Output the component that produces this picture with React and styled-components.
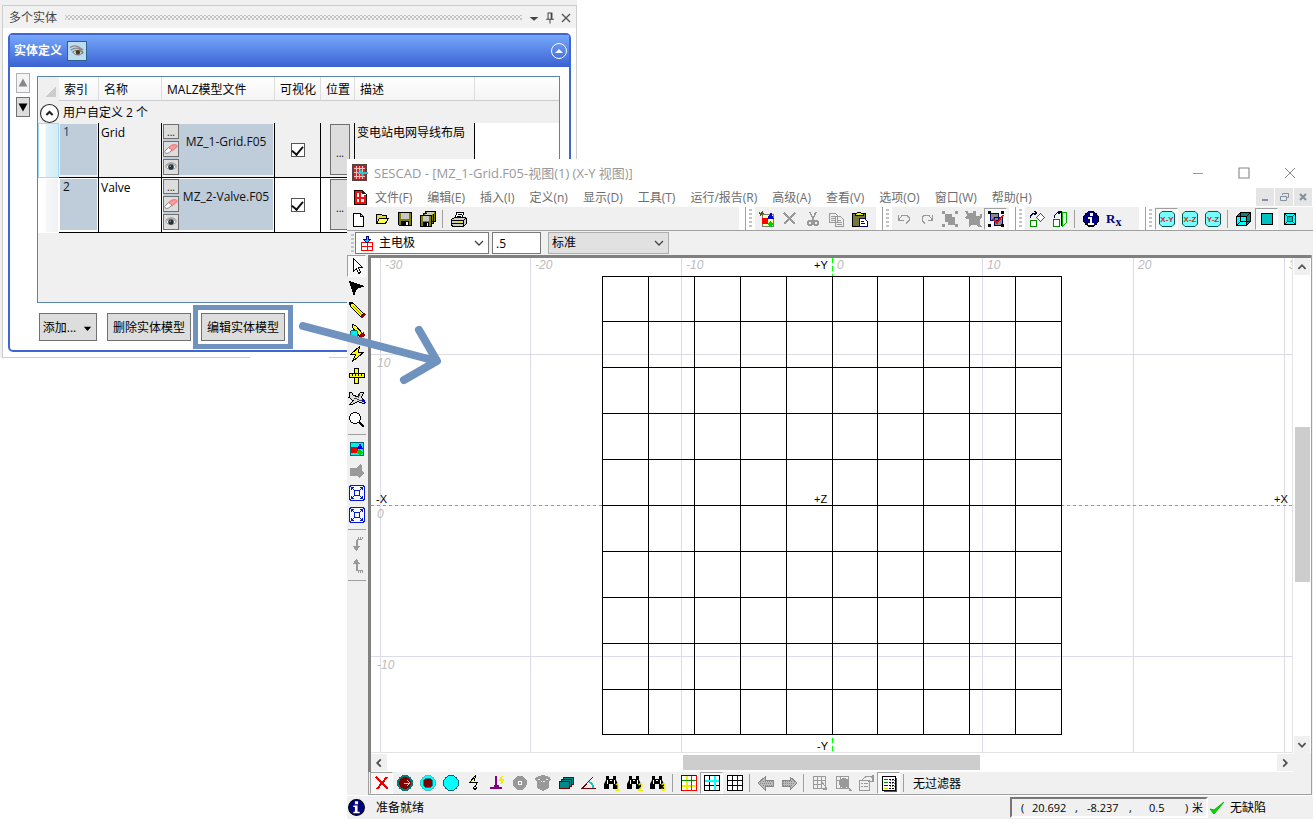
import React from 'react';
import styled, {createGlobalStyle, css} from 'styled-components';

const GlobalStyle = createGlobalStyle`
	* {
		box-sizing: border-box;
	}

	body {
		margin: 0;
		background: #fff;
		color: #000;
		font: 12px/16px "Open Sans", "Noto Sans CJK SC", sans-serif;
	}

	button, input, select {
		margin: 0;
		padding: 0;
		font: inherit;
		color: inherit;
	}
`;

const ICONS = {
	eye: <>
		<path d="M1 5q5-3 9-1l6 4M2 8q6-4 10-1l4 4" fill="none" stroke="#8a8a8a" strokeWidth="1.500"/>
		<path d="M4 10q5-4 12 1-5 4-9 2z" fill="#ddd" stroke="#666"/>
		<circle cx="10" cy="10.500" r="2.500" fill="#503820"/>
	</>,
	smallEye: <>
		<path d="M2 9q7-8 14 0-7 7-14 0z" fill="#f4f4f4" stroke="#8c8c8c"/>
		<circle cx="9" cy="9" r="3.600" fill="#263238"/>
		<path d="M2 7q7-7 14 0" fill="none" stroke="#777"/>
		<circle cx="8" cy="8" r="1" fill="#9ab"/>
	</>,
	eraser: <>
		<path d="M1 12l5-5 5 3-5 4q-5 2-5-2z" fill="#fff" stroke="#666"/>
		<path d="M6 7l4-3q7-2 7 2l-6 5z" fill="#f99" stroke="#d66"/>
	</>,
	app: <>
		<path d="M2 1h13v15H2z" fill="#d22" stroke="#544" strokeWidth="2"/>
		<path d="M5.500 2v13M8.500 2v13M11.500 2v13M3 4.500h11M3 8.500h11M3 12.500h11" stroke="#fbb"/>
		<path d="M7 9h10M9 6l3 6" stroke="#2bc6cf" strokeWidth="2"/>
	</>,
	doc: <>
		<path d="M3.500 2.500h8l4 4v10h-12z" fill="#fff" stroke="#200"/>
		<path d="M5 3v13M9 3v13M14 7v9M4 4h8M4 10h11M4 15h11" stroke="#e11" strokeWidth="2"/>
		<path d="M11 2v4h4z" fill="#222"/>
	</>,
	newFile: <path d="M3.500 3.500h7l3 3v10h-10zM10.500 3.500v3h3" fill="#fff" stroke="#000"/>,
	open: <>
		<path d="M3.500 13V4.500h5l1 1h4V8" fill="#dd4" stroke="#000"/>
		<path d="M3.500 13.500l3-5h9l-3 5z" fill="#ff4" stroke="#000"/>
	</>,
	save: <>
		<path d="M2.500 2.500h13v13h-12l-1-1z" fill="#808000" stroke="#000"/>
		<path d="M5 3h8v6H5z" fill="#c8c8c8"/>
		<path d="M5 11h8v5H5z" fill="#000"/>
		<path d="M10 12h2v3h-2z" fill="#fff"/>
	</>,
	saveAll: <>
		<path d="M6.500 1.500h10v10h-10zM4.500 3.500h10v10h-10z" fill="#808000" stroke="#000"/>
		<path d="M8 2h7v2H8zM6 4h7v2H6z" fill="#c8c8c8"/>
		<path d="M1.500 5.500h11v11h-11z" fill="#808000" stroke="#000"/>
		<path d="M4 6h6v5H4z" fill="#c8c8c8"/>
		<path d="M4 12h6v4H4z" fill="#000"/>
		<path d="M8 13h1v3H8z" fill="#fff"/>
	</>,
	print: <>
		<path d="M5 8l2-6h7l-2 6z" fill="#fff" stroke="#000"/>
		<path d="M8 4.500h4M7 6.500h4" stroke="#000"/>
		<path d="M1.500 9.500l3-2h10l2 1v5l-3 3h-11l-1-2z" fill="#ccc" stroke="#000"/>
		<path d="M2 10.500h11l3-2M2 13.500h11v2M13.500 10v6" fill="none" stroke="#000"/>
		<path d="M8 12h3" stroke="#dd0"/>
	</>,
	shapesNew: <>
		<path d="M4.500 4.500h11v12h-11z" fill="#ffff9c" stroke="#777"/>
		<path d="M4 8h6v6H4z" fill="#f00"/>
		<path d="M9 9l4-7 3 7z" fill="#00c"/>
		<path d="M9 14l3-3 3 3-3 3z" fill="#0c0"/>
		<path d="M1 2l4 4M5 1L2 6M1 3.500h5" stroke="#550"/>
	</>,
	remove: <path d="M3 3l11 11M14 3L3 14" stroke="#999" strokeWidth="2"/>,
	cut: <>
		<path d="M6 2l4 9M12 2L8 11" fill="none" stroke="#999" strokeWidth="1.500"/>
		<circle cx="6" cy="13" r="2.200" fill="none" stroke="#999" strokeWidth="1.500"/>
		<circle cx="12" cy="13" r="2.200" fill="none" stroke="#999" strokeWidth="1.500"/>
	</>,
	copy: <>
		<path d="M2.500 3.500h6l2 2v7h-8zM8.500 6.500h5l3 3v7h-8z" fill="#eee" stroke="#999"/>
		<path d="M4 6.500h4M4 8.500h4M4 10.500h4M10 10.500h4M10 12.500h5M10 14.500h5" stroke="#999"/>
	</>,
	paste: <>
		<path d="M2.500 3.500h13v13h-13z" fill="#77773c" stroke="#000"/>
		<path d="M5 5.500V4l2-1 1-1h2l1 1 2 1v1.500z" fill="#ee0" stroke="#000"/>
		<path d="M9.500 8.500h5l3 3v5h-8z" fill="#fff" stroke="#006"/>
		<path d="M11 11.500h3M11 13.500h4" stroke="#006"/>
	</>,
	undo: <path d="M3.500 5v5h5M4 9.500l3-4h5l2 2v3l-3 3" fill="none" stroke="#999"/>,
	redo: <path d="M14.500 5v5h-5M14 9.500l-3-4H6l-2 2v3l3 3" fill="none" stroke="#999"/>,
	group: <path d="M4 4h7v3h3v8H7v-3H4zM1 1h3v3H1zM14 1h3v3h-3zM1 14h3v3H1zM14 14h3v3h-3z" fill="#999"/>,
	ungroup: <path d="M1 1h3v2h5V1h3v5h4V4h2v3l-2 2v5l2 3h-4l-1-2H7l-2 2V9H2L1 7l2-2z" fill="#999"/>,
	groupEdit: <>
		<path d="M3.500 3.500h8v7h-8zM7.500 7.500h8v8h-8z" fill="#888" stroke="#006"/>
		<path d="M1 1h3v3H1zM14 1h3v3h-3zM1 14h3v3H1zM14 14h3v3h-3z" fill="#000"/>
		<path d="M6 9l4 4 6-8" fill="none" stroke="#f00" strokeWidth="1.500"/>
	</>,
	rotate: <>
		<path d="M2.500 10.500h6v6h-6zM12.500 3.500l4 4-4 4-4-4z" fill="#fff" stroke="#080"/>
		<path d="M2.500 8V6l3-3H8M6 1l3 2-3 2" fill="none" stroke="#003"/>
	</>,
	rotate3d: <>
		<path d="M2.500 9.500h6v7h-6z" fill="#fff" stroke="#080"/>
		<path d="M11.500 2.500h4v10l-4 4z" fill="#dfd" stroke="#0a0"/>
		<path d="M3 8q1-6 7-6v14M7 1l4 1-4 2" fill="none" stroke="#003"/>
	</>,
	info: <>
		<circle cx="9" cy="9" r="7.500" fill="#000080" stroke="#000"/>
		<path d="M7.500 3h3v3h-3zM6 7h4v6h2v1.500H6V13h1.500V8.500H6z" fill="#fff"/>
	</>,
	viewCube: <>
		<path d="M1.500 6.500l4-4h10v9l-4 4h-10z" fill="#0a8080" stroke="#000"/>
		<path d="M2 7h9v8H2z" fill="#0ff"/>
		<path d="M1.500 6.500h10v9M11.500 6.500l4-4M5.500 2.500v9h10M2 15l4-4" fill="none" stroke="#000"/>
	</>,
	viewFlat: <path d="M3.500 3.500h11v11h-11z" fill="#00c0c0" stroke="#000"/>,
	viewInset: <>
		<path d="M3.500 3.500h11v11h-11z" fill="#0ff" stroke="#000"/>
		<path d="M6.500 6.500h5v5h-5zM4 4l3 3M14 4l-3 3M4 14l3-3M14 14l-3-3" fill="#0bb" stroke="#055"/>
	</>,
	pointer: <path d="M5.500 1.500v13l3-3 2 5 2-1-2-5h4z" fill="#fff" stroke="#000"/>,
	solidPointer: <path d="M1 2l16 5-8 3-3 7z" fill="#000"/>,
	pencil: <>
		<path d="M1.500 1.500l4 1 10 10-3 3-10-10z" fill="#ff0" stroke="#000"/>
		<path d="M5 5l9 9" stroke="#880"/>
		<path d="M12 16l4-4 2 1-4 4z" fill="#a00"/>
		<path d="M1 1h4L2 5z" fill="#000"/>
	</>,
	pencilBall: <>
		<path d="M4.500 1.500l3 1 8 9-3 3-8-10z" fill="#ff0" stroke="#000"/>
		<circle cx="6" cy="11" r="4" fill="#0ee" stroke="#066"/>
		<path d="M11 12l5-3 1 4-4 2z" fill="#900"/>
	</>,
	bolt: <path d="M11.500 1.500l-9 8h5l-3 7 11-9h-5z" fill="#ff0" stroke="#000"/>,
	ruler: <>
		<path d="M6.500 1.500h4v15h-4z" fill="#ff0" stroke="#000"/>
		<path d="M1.500 6.500h15v4h-15z" fill="#ff0" stroke="#000"/>
		<path d="M4.500 7v2M7.500 7v2M10.500 7v2M13.500 7v2" stroke="#000"/>
	</>,
	plane: <>
		<path d="M1.500 3.500h2l2 3 4 1 3-4h3l-2 5 2 2 2 3-2 1-6-2-5 3H2l3-4-4-3z" fill="#ddd" stroke="#000"/>
		<path d="M6 9l8 3M12 5l-2 4" stroke="#444"/>
		<path d="M14 11l3 2" stroke="#00c" strokeWidth="2"/>
	</>,
	magnify: <>
		<circle cx="7" cy="7" r="5.500" fill="#fff" stroke="#000"/>
		<path d="M11 11l5 5" stroke="#000" strokeWidth="2"/>
	</>,
	shapes: <>
		<path d="M2.500 2.500h13v13h-13z" fill="#0ee" stroke="#066"/>
		<path d="M3 7h7v6H3z" fill="#e00"/>
		<path d="M9 9l3-6 3 6z" fill="#00e"/>
		<path d="M8 12l3-3 4 3-3 3z" fill="#0c0"/>
	</>,
	shapesOff: <path d="M2 6h7l3-4 2 1v5l2 3-2 2-2 3-3-2H2z" fill="#999"/>,
	zoomFit: <>
		<path d="M3 1.500h12l1.500 1.500v12l-1.500 1.500H3L1.500 15V3z" fill="#f8f8ff" stroke="#0018c8"/>
		<path d="M6.500 6.500h5v5h-5zM3 3l3 3M15 3l-3 3M3 15l3-3M15 15l-3-3M3.500 6V3.500H6M12 3.500h2.500V6M3.500 12v2.500H6M12 14.500h2.500V12" fill="none" stroke="#0018c8"/>
	</>,
	down: <>
		<path d="M7.500 4.500h2V11h3l-4 5-4-5h3z" fill="#999"/>
		<path d="M9 4.500h5M10.500 2v2M12.500 2v2M14.500 2v2" stroke="#999"/>
	</>,
	up: <>
		<path d="M7.500 14V7h-3l4-5 4 5h-3v6z" fill="#999"/>
		<path d="M8 13.500h6M10.500 13v3M12.500 13v3M14.500 13v3" stroke="#999"/>
	</>,
	redX: <path d="M3 3l12 12M14 3L4 15" stroke="#e00" strokeWidth="2"/>,
	ballArrow: <>
		<circle cx="9" cy="9" r="7" fill="#800000" stroke="#087878" strokeWidth="2"/>
		<path d="M8 9.500h6M11 6l3 3-3 3" fill="none" stroke="#9dd"/>
	</>,
	ballRed: <>
		<circle cx="9" cy="9" r="7.500" fill="#0ff" stroke="#5bb"/>
		<circle cx="9" cy="9" r="5" fill="#800000" stroke="#088"/>
	</>,
	ballCyan: <circle cx="9" cy="9" r="7.500" fill="#0ff" stroke="#067"/>,
	spark: <path d="M10.500 1.500l-6 7h3l5 0-3 5M8 13l2 3 2-3M10.500 2l-1 5" fill="#ff5" stroke="#000"/>,
	probe: <>
		<path d="M2 14h12M8 2v12" stroke="#800080" strokeWidth="2"/>
		<path d="M6 11h5v4H6z" fill="#800080"/>
		<path d="M14 2l-2 4h3l-2 4" fill="none" stroke="#ee0" strokeWidth="1.500"/>
	</>,
	disc: <>
		<circle cx="9" cy="9" r="7" fill="#999"/>
		<circle cx="9" cy="9" r="2.500" fill="#fff"/>
		<circle cx="9" cy="9" r="1" fill="#999"/>
	</>,
	box: <>
		<path d="M2 3l7-2 7 2 1 3-2 1v7l-6 3-6-3V7L1 6z" fill="#999"/>
		<path d="M4 5l5 3 5-3" fill="none" stroke="#eee" strokeDasharray="2 1"/>
	</>,
	stack: <>
		<path d="M6.500 3.500h10v7h-10z" fill="#088" stroke="#700"/>
		<path d="M4.500 5.500h10v7h-10z" fill="#088" stroke="#700"/>
		<path d="M2.500 7.500h10v7h-10z" fill="#088" stroke="#700"/>
	</>,
	angle: <>
		<path d="M13 3L2 14.500h14" fill="none" stroke="#700"/>
		<path d="M9 8q4 1 4 6" fill="none" stroke="#0cc" strokeWidth="2"/>
	</>,
	gridMulti: <>
		<path d="M1 1h15v15H1z" fill="#fff"/>
		<path d="M1 1.500h15M1.500 1v15" stroke="#00f"/>
		<path d="M16.500 1v16M1 16.500h15" stroke="#f00"/>
		<path d="M6.500 2v14M2 11.500h14" stroke="#ee0" strokeWidth="2"/>
		<path d="M11.500 2v14M2 6.500h14" stroke="#080"/>
		<path d="M1.500 9v8" stroke="#00f"/>
	</>,
	gridCyan: <>
		<path d="M1.500 1.500h15v15h-15zM6.500 2v15M2 11.500h15" fill="#fff" stroke="#000"/>
		<path d="M11.500 2v14M2 6.500h14" stroke="#0ff" strokeWidth="2"/>
	</>,
	gridBlue: <>
		<path d="M1.500 1.500h15v15h-15zM6.500 2v15M2 6.500h15M2 11.500h15" fill="#fff" stroke="#000"/>
		<path d="M11.500 2v14" stroke="#00f"/>
	</>,
	left: <>
		<path d="M1 9l7-6v3h8v6H8v4z" fill="#bbb" stroke="#888"/>
		<path d="M3 9.500h12M6 7.500h9M6 11.500h9" stroke="#888" strokeDasharray="1 1"/>
	</>,
	right: <>
		<path d="M17 9l-7-6v3H2v6h8v4z" fill="#bbb" stroke="#888"/>
		<path d="M3 9.500h12M3 7.500h9M3 11.500h9" stroke="#888" strokeDasharray="1 1"/>
	</>,
	gridPick: <path d="M2.500 2.500h12v12h-12zM6.500 3v12M10.500 3v12M3 6.500h12M3 10.500h7M11 8l5 7M12 15.500h4" fill="none" stroke="#999"/>,
	gridFind: <>
		<path d="M2.500 2.500h12v12h-12zM6.500 3v12M3 6.500h12" fill="none" stroke="#999"/>
		<circle cx="10" cy="9" r="5" fill="#999"/>
		<path d="M13 12l4 5" stroke="#999" strokeWidth="2"/>
	</>,
	props: <>
		<path d="M2.500 6.500h10v10h-10z" fill="#eee" stroke="#999"/>
		<path d="M4 9.500h2M7 9.500h4M4 12.500h2M7 12.500h4M5 6l4-3.500h5l2 2v3h-5" fill="none" stroke="#999"/>
		<path d="M16 1v7" stroke="#999" strokeWidth="2"/>
	</>,
	legend: <>
		<path d="M2.500 2.500h13v14h-13z" fill="#fff" stroke="#000"/>
		<path d="M16.500 4v13M4 17.500h13" stroke="#555"/>
		<path d="M4 5.500h4" stroke="#f00"/>
		<path d="M4 8.500h4" stroke="#080"/>
		<path d="M4 11.500h4" stroke="#00f"/>
		<path d="M4 14.500h4" stroke="#cc0"/>
		<path d="M9 5.500h5M9 8.500h5M9 11.500h5M9 14.500h5" stroke="#000" strokeDasharray="2 1"/>
		<path d="M10 6.500h5M10 9.500h5M10 12.500h5" stroke="#777" strokeDasharray="1 1"/>
	</>,
	check: <path d="M2 10l4 5L16 3 6 11z" fill="#0d0" stroke="#0b0"/>,
	chevronDown: <path d="M5 7l4 4 4-4" fill="none" stroke="#444" strokeWidth="1.300"/>,
	minus: <path d="M4 9.500h10" stroke="#999"/>,
	square: <path d="M4.500 4.500h9v9h-9z" fill="none" stroke="#888"/>,
	close: <path d="M4 4l10 10M14 4L4 14" stroke="#888"/>,
	mdiMin: <path d="M6 12h6" stroke="#8090a0" strokeWidth="2"/>,
	mdiRestore: <path d="M7.500 7V5.500h6v4H12M5.500 8.500h6v4h-6z" fill="none" stroke="#8090a0"/>,
	mdiClose: <path d="M6 6l6 6M12 6l-6 6" stroke="#8090a0" strokeWidth="2"/>,
	caret: <path d="M4 8h10l-5 4z" fill="#444"/>,
	pin: <path d="M6.500 2.500h5v8h-5zM10.500 3v7M4 10.500h10M9 11v5" fill="none" stroke="#444" strokeWidth="1.300"/>,
	panelClose: <path d="M4.500 4.500l9 9M13.500 4.500l-9 9" stroke="#555" strokeWidth="1.500"/>,
	collapse: <>
		<circle cx="9" cy="9" r="7.500" fill="none" stroke="#fff"/>
		<path d="M5 11l4-4 4 4z" fill="#fff"/>
	</>,
	groupToggle: <>
		<circle cx="9" cy="9" r="8.500" fill="#fff" stroke="#222"/>
		<path d="M6 10.500l3-3 3 3" fill="none" stroke="#222" strokeWidth="2"/>
	</>,
	triUp: <path d="M4 13l5-9 5 9z" fill="#888"/>,
	triDown: <path d="M4 5l5 9 5-9z" fill="#000"/>,
	addCaret: <path d="M3 6h12l-6 7z" fill="#000"/>,
	target: <>
		<path d="M3.500 8.500h11v8h-11zM9 8v9M3 12.500h12" fill="#fff" stroke="#f00"/>
		<path d="M8 2h2v3h3L9 9 5 5h3z" fill="#0cf" stroke="#008"/>
	</>
};

const Svg = styled.svg`
	display: block;
	flex: none;
	width: ${props => props.$size || 18}px;
	height: ${props => props.$size || 18}px;
`;

const Icon = ({name, size, crisp}) => (
	<Svg viewBox="0 0 18 18" $size={size} shapeRendering={crisp ? 'crispEdges' : 'auto'} aria-hidden="true">
		{ICONS[name]}
	</Svg>
);

const PlaneLabel = ({text}) => (
	<Svg viewBox="0 0 18 18" aria-hidden="true">
		<path d="M4 1.500h10l2.500 2.500v10L14 16.500H4L1.500 14V4z" fill="#7ff" stroke="#055"/>
		<text x="9" y="12" textAnchor="middle" fontFamily="Liberation Sans, sans-serif" fontSize="8" fontWeight="700" fill="#d22">{text}</text>
	</Svg>
);

const RxLabel = () => (
	<Svg viewBox="0 0 18 18" aria-hidden="true">
		<text x="1" y="13" fontFamily="Liberation Serif, serif" fontSize="13" fontWeight="700" fill="#000080">
			R<tspan dy="3" fontSize="12">x</tspan>
		</text>
	</Svg>
);

const Binoculars = ({text}) => (
	<Svg viewBox="0 0 18 18" aria-hidden="true">
		<path d="M3 2h3v3h4V2h3v4l2 4v5h-5v-5H6v5H1v-5l2-4z" fill="#000"/>
		<path d="M4.500 6v4M11.500 6v4M7 6.500h2" stroke="#fff"/>
		<text x="12" y="17" fontFamily="Liberation Sans, sans-serif" fontSize="10" fontWeight="700" fill="#ee0">{text}</text>
	</Svg>
);

const Desktop = styled.main`
	position: relative;
	display: grid;
	grid-template-columns: 1fr;
	min-height: 100vh;
	min-width: 1200px;
`;

/* Entity panel */

const Panel = styled.section`
	grid-area: 1 / 1;
	align-self: start;
	justify-self: start;
	width: 577px;
	padding: 5px 0 0 2px;
	background: #f0f0f0;
`;

const PanelFrame = styled.div`
	border: solid #ccc;
	border-width: 1px 1px 0;
	background: #fff;
`;

const PanelTitle = styled.header`
	display: flex;
	align-items: center;
	height: 22px;
	padding: 1px 2px 0 6px;
	background: #f1f1f1;
	color: #444;
`;

const Grip = styled.span`
	flex: 1;
	height: 5px;
	margin: 0 4px 0 8px;
	background-image: radial-gradient(#999 1px, transparent 1px), radial-gradient(#999 1px, transparent 1px);
	background-size: 4px 4px;
	background-position: 0 0, 2px 2px;
	opacity: 0.5;
`;

const PlainButton = styled.button`
	display: flex;
	align-items: center;
	justify-content: center;
	width: ${props => props.$width || 16}px;
	height: 18px;
	border: 0;
	background: transparent;
`;

const PanelBody = styled.div`
	padding: 5px;
`;

const Card = styled.div`
	border: 2px solid #3f66d4;
	border-radius: 5px;
`;

const CardTitle = styled.header`
	display: flex;
	align-items: center;
	gap: 5px;
	height: 32px;
	padding-left: 4px;
	background: linear-gradient(#76a8fb, #3b62d2);
	color: #fff;
	font-weight: 700;

	${PlainButton} {
		margin-left: auto;
	}
`;

const EyeButton = styled.button`
	display: flex;
	align-items: center;
	justify-content: center;
	width: 20px;
	height: 20px;
	border: 1px solid #2c628b;
	background: #bcddf0;
`;

const CardBody = styled.div`
	display: grid;
	grid-template-columns: 14px 1fr;
	gap: 0 7px;
	padding: 9px 9px 9px 6px;
`;

const Movers = styled.div`
	display: flex;
	flex-direction: column;
	gap: 4px;
	margin-top: -3px;
`;

const MoveButton = styled.button`
	display: flex;
	align-items: center;
	justify-content: center;
	width: 14px;
	height: 20px;
	border: 1px solid ${props => props.disabled ? '#adb2b5' : '#707070'};
	background: ${props => props.disabled ? '#f4f4f4' : '#ddd'};
`;

const TableBox = styled.div`
	height: 227px;
	border: 1px solid #5b86a8;
	background: #f0f0f0;
`;

const Table = styled.table`
	width: 100%;
	table-layout: fixed;
	border-collapse: separate;
	border-spacing: 0;

	th, td {
		padding: 0;
		text-align: left;
		font-weight: 400;
		vertical-align: top;
	}
`;

const HeadCell = styled.th`
	height: 24px;
	padding-left: 5px !important;
	border-right: 1px solid #ddd;
	border-bottom: 1px solid #ccc;
	background: linear-gradient(#fff, #f3f4f5);
	line-height: 23px;
	white-space: nowrap;

	&:last-child {
		border-right: 0;
	}

	span {
		display: block;
		height: 23px;
		padding-top: 1px;
	}
`;

const CornerCell = styled.th`
	background: linear-gradient(135deg, transparent 50%, #ccc 50%) 8px 10px / 10px 10px no-repeat;
`;

const GroupLabel = styled.div`
	display: flex;
	align-items: center;
	gap: 4px;
	height: 22px;
	padding: 2px 0 0 2px;
`;

const ToggleButton = styled.button`
	width: 19px;
	height: 19px;
	border: 0;
	background: transparent;
`;

const Marker = styled.td`
	border: 1px solid ${props => props.$current ? '#9cdcf8' : '#fff'};
	background: ${props => props.$current
		? 'linear-gradient(90deg, #fff 30%, #e0f2f9 40%, #d4ecf5)'
		: 'linear-gradient(90deg, #fff 30%, #f6f7f8 40%, #f0f1f3)'};
`;

const Cell = styled.td`
	height: 55px;
	padding: ${props => props.$filled ? '1px 1px 2px' : '2px'} !important;
	border-right: 1px solid #000;
	border-bottom: 1px solid #000;
	background: ${props => props.$current ? '#f0f0f0' : '#fff'};
	white-space: nowrap;
`;

const Blank = styled.td`
	background: #fff;
`;

const Filled = styled.div`
	display: flex;
	height: 51px;
	padding-left: ${props => props.$inset ? 3 : 0}px;
	background: #bfccda;
	color: ${props => props.$link ? '#004a80' : '#111'};
`;

const Stack = styled.div`
	display: flex;
	flex-direction: column;
	gap: 2px;
`;

const TinyButton = styled.button`
	display: flex;
	align-items: center;
	justify-content: center;
	width: 16px;
	height: 16px;
	border: 1px solid #707070;
	background: #ddd;
	font-size: 10px;
	line-height: 8px;
`;

const FileName = styled.span`
	flex: 1;
	padding-top: 10px;
	text-align: center;
`;

const PlaceButton = styled.button`
	display: block;
	width: 20px;
	height: 51px;
	margin: -1px 0 0 7px;
	padding-top: 6px;
	border: 1px solid #707070;
	background: #ddd;
	font-size: 10px;
`;

const Tick = styled.input`
	display: block;
	appearance: none;
	width: 14px;
	height: 14px;
	margin: 18px auto 0 !important;
	border: 1px solid #555;
	background: #fff;

	&:checked::after {
		content: "";
		display: block;
		width: 5px;
		height: 9px;
		margin: 0 auto;
		border: solid #111;
		border-width: 0 2px 2px 0;
		transform: rotate(40deg);
	}
`;

const Actions = styled.div`
	grid-column: 2;
	display: flex;
	gap: 10px;
	padding: 10px 0 0 2px;
`;

const ActionButton = styled.button`
	display: flex;
	align-items: center;
	justify-content: center;
	gap: 6px;
	min-width: ${props => props.$wide ? 84 : 58}px;
	height: 28px;
	padding-top: 2px;
	border: 1px solid #707070;
	background: #ddd;
	white-space: nowrap;

	${props => props.$marked && css`
		outline: 5px solid #7092be;
		outline-offset: 3px;
	`}
`;

const PanelBottom = styled.div`
	height: 1px;
	background: linear-gradient(90deg, #ccc 247px, #fff 247px, #fff 326px, #ccc 326px);
`;

const Entity = ({index, name, file, note, current}) => (
	<tr>
		<Marker $current={current}/>
		<Cell $current={current} $filled><Filled $inset $link={current}>{index}</Filled></Cell>
		<Cell $current={current}>{name}</Cell>
		<Cell $current={current} $filled>
			<Filled>
				<Stack>
					<TinyButton aria-label={`${name} file`}>...</TinyButton>
					<TinyButton aria-label={`${name} clear`}><Icon name="eraser" size={14}/></TinyButton>
					<TinyButton aria-label={`${name} preview`}><Icon name="smallEye" size={14}/></TinyButton>
				</Stack>
				<FileName>{file}</FileName>
			</Filled>
		</Cell>
		<Cell $current={current}><Tick type="checkbox" defaultChecked aria-label={`${name} visible`}/></Cell>
		<Cell $current={current}><PlaceButton>...</PlaceButton></Cell>
		<Cell $current={current}>{note}</Cell>
		<Blank/>
	</tr>
);

const EntityPanel = () => (
	<Panel>
		<PanelFrame>
			<PanelTitle>
				多个实体
				<Grip/>
				<PlainButton aria-label="Menu"><Icon name="caret" size={16}/></PlainButton>
				<PlainButton aria-label="Pin"><Icon name="pin" size={14}/></PlainButton>
				<PlainButton aria-label="Close"><Icon name="panelClose" size={16}/></PlainButton>
			</PanelTitle>
			<PanelBody>
				<Card>
					<CardTitle>
						实体定义
						<EyeButton aria-label="Show"><Icon name="eye" size={16}/></EyeButton>
						<PlainButton aria-label="Collapse" $width={20}><Icon name="collapse"/></PlainButton>
					</CardTitle>
					<CardBody>
						<Movers>
							<MoveButton disabled aria-label="Up"><Icon name="triUp" size={16}/></MoveButton>
							<MoveButton aria-label="Down"><Icon name="triDown" size={16}/></MoveButton>
						</Movers>
						<TableBox>
							<Table>
								<colgroup>
									{[21, 40, 63, 113, 46, 34, 120].map((width, i) => <col key={i} width={width}/>)}
									<col/>
								</colgroup>
								<thead>
									<tr>
										<CornerCell/>
										{['索引', '名称', 'MALZ模型文件', '可视化', '位置', '描述'].map(title => (
											<HeadCell key={title}><span>{title}</span></HeadCell>
										))}
										<HeadCell/>
									</tr>
								</thead>
								<tbody>
									<tr>
										<td colSpan={8}>
											<GroupLabel>
												<ToggleButton aria-label="Toggle group"><Icon name="groupToggle" size={19}/></ToggleButton>
												用户自定义 2 个
											</GroupLabel>
										</td>
									</tr>
									<Entity index={1} name="Grid" file="MZ_1-Grid.F05" note="变电站电网导线布局" current/>
									<Entity index={2} name="Valve" file="MZ_2-Valve.F05"/>
								</tbody>
							</Table>
						</TableBox>
						<Actions>
							<ActionButton>添加... <Icon name="addCaret" size={11}/></ActionButton>
							<ActionButton $wide>删除实体模型</ActionButton>
							<ActionButton $wide $marked>编辑实体模型</ActionButton>
						</Actions>
					</CardBody>
				</Card>
			</PanelBody>
			<PanelBottom/>
		</PanelFrame>
	</Panel>
);

/* CAD window */

const Window = styled.section`
	grid-area: 1 / 1;
	display: flex;
	flex-direction: column;
	margin: 159px 3px 6px 347px;
	background: #fff;
`;

const TitleBar = styled.header`
	display: flex;
	align-items: center;
	gap: 5px;
	height: 27px;
	padding: 0 11px 0 4px;
	color: #999;
`;

const TitleText = styled.h1`
	flex: 1;
	margin: 0;
	font-size: 13px;
	font-weight: 400;
`;

const Caption = styled.div`
	display: flex;
	gap: 22px;

	${PlainButton} {
		width: 24px;
	}
`;

const MenuBar = styled.nav`
	display: flex;
	align-items: center;
	height: 21px;
	padding: 1px 1px 0 4px;
	color: #6d6d6d;
`;

const Menus = styled.div`
	display: flex;
	flex: 1;
	gap: 15px;
	padding: 1px 0 0 6px;

	a {
		color: inherit;
		text-decoration: none;
		white-space: nowrap;
	}
`;

const MdiButtons = styled.div`
	display: flex;
	gap: 1px;

	${PlainButton} {
		width: 18px;
		background: #e5e5e5;
	}
`;

const Bands = styled.div`
	display: flex;
	height: 24px;
	border-bottom: 1px solid #a0a0a0;
	background: #fff;
`;

const Band = styled.div`
	display: flex;
	${props => props.$width ? `width: ${props.$width}px;` : 'flex: 1;'}
	padding-right: ${props => props.$last ? 0 : 6}px;
	${props => !props.$last && 'border-right: 1px solid #a0a0a0;'}
`;

const BandInner = styled.div`
	display: flex;
	flex: 1;
	align-items: center;
	background: #f0f0f0;
`;

const BandGrip = styled.span`
	width: 3px;
	margin: 2px 3px;
	background: repeating-linear-gradient(#c4c4c4 0 2px, transparent 2px 4px);
`;

const ToolButton = styled.button`
	display: flex;
	flex: none;
	align-items: center;
	justify-content: center;
	width: 23px;
	height: 22px;
	border: 1px solid transparent;
	background: transparent;

	${props => props.$pressed && css`
		border-color: #a0a0a0 #fff #fff #a0a0a0;
		background: #f8f8f8;
	`}
`;

const Separator = styled.span`
	flex: none;
	width: 1px;
	height: 18px;
	margin: 0 4px 0 3px;
	background: #a0a0a0;
`;

const Tool = ({name, pressed, children}) => (
	<ToolButton aria-label={name} $pressed={pressed}>{children || <Icon name={name} crisp/>}</ToolButton>
);

const Options = styled.div`
	display: flex;
	gap: 3px;
	height: 24px;
	padding: 1px 0 1px 1px;
	background: #f0f0f0;
`;

const Field = styled.label`
	display: flex;
	align-items: center;
	width: ${props => props.$width}px;
	height: 22px;
	margin-left: ${props => props.$gap || 0}px;
	padding-left: ${props => props.$pad}px;
	border: 1px solid ${props => props.$flat ? '#adadad' : '#7a7a7a'};
	background: ${props => props.$flat ? '#e1e1e1' : '#fff'};

	select, input {
		flex: 1;
		min-width: 0;
		width: 100%;
		height: 18px;
		padding: 0 3px;
		border: 0;
		background: transparent;
		appearance: none;
	}
`;

const Work = styled.div`
	display: flex;
	flex: 1;
	background: #f0f0f0;
`;

const ToolColumn = styled.div`
	display: flex;
	flex-direction: column;
	width: 21px;

	${ToolButton} {
		width: 19px;
	}

	${Separator} {
		width: 18px;
		height: 1px;
		margin: 3px 0 3px 1px;
	}
`;

const View = styled.div`
	display: flex;
	flex: 1;
	flex-direction: column;
	min-width: 0;
	margin-right: 1px;
	border-right: 1px solid #a0a0a0;
	border-bottom: 1px solid #a0a0a0;
`;

const ViewFrame = styled.div`
	display: grid;
	flex: 1;
	grid-template: 1fr 19px / 1fr 18px;
	border: solid #808080;
	border-width: 3px 0 0 3px;
	background: #fff;
`;

const Drawing = styled.svg`
	display: block;
	width: 100%;
	height: 100%;
	min-height: 494px;
	border: solid #e3e3e3;
	border-width: 0 1px 1px 0;
`;

const ScrollBar = styled.div`
	display: flex;
	flex-direction: ${props => props.$vertical ? 'column' : 'row'};
	align-items: center;

	${PlainButton} {
		width: 16px;
		height: 17px;
		background: #f0f0f0;
	}
`;

const Track = styled.div`
	display: flex;
	flex: 1;
	flex-direction: ${props => props.$vertical ? 'column' : 'row'};
	align-items: center;
`;

const Thumb = styled.div`
	flex: ${props => props.$share};
	${props => props.$vertical ? 'width: 15px;' : 'height: 15px;'}
	background: ${props => props.$visible ? '#cdcdcd' : 'transparent'};
`;

const Corner = styled.div`
	background: #f0f0f0;
`;

const ViewTools = styled.div`
	display: flex;
	align-items: center;
	height: 22px;
	padding-left: 1px;
	border-left: 1px solid #a0a0a0;
`;

const Filter = styled.span`
	padding: 1px 0 0 5px;
`;

const StatusBar = styled.footer`
	display: flex;
	align-items: center;
	height: 24px;
	padding-right: 47px;
	border-top: 1px solid #fff;
	background: #f0f0f0;
`;

const StatusText = styled.span`
	flex: 1;
	padding: 1px 0 0 10px;
`;

const Coordinates = styled.output`
	display: grid;
	grid-template-columns: 11px 43px 12px 42px 20px 36px 7px auto;
	width: 198px;
	height: 21px;
	padding-left: 9px;
	border: 2px solid;
	border-color: #777 #fff #fff #777;
	font-size: 11px;
	line-height: 18px;
	white-space: nowrap;
`;

const Errors = styled.span`
	padding: 1px 0 0 4px;
`;

const ArrowOverlay = styled.svg`
	position: absolute;
	left: 290px;
	top: 315px;
	width: 160px;
	height: 80px;
	pointer-events: none;
`;

const GRID_X = [231, 277, 323, 369, 415, 461, 506, 552, 598, 644, 690];
const GRID_Y = [18, 63, 109, 155, 201, 247, 293, 339, 385, 431, 476];
const GUIDE_X = [[9, '-30'], [159, '-20'], [310, '-10'], [461, '0'], [611, '10'], [762, '20'], [913, '30']];
const GUIDE_Y = [[96, '10'], [247, '0'], [398, '-10']];
const MENUS = [
	'文件(F)', '编辑(E)', '插入(I)', '定义(n)', '显示(D)', '工具(T)', '运行/报告(R)',
	'高级(A)', '查看(V)', '选项(O)', '窗口(W)', '帮助(H)'
];

const GridDrawing = () => (
	<Drawing role="img" aria-label="Grid">
		<g stroke="#dddaea" shapeRendering="crispEdges">
			{GUIDE_X.map(([x]) => <line key={x} x1={x + 0.5} x2={x + 0.5} y1="0" y2="100%"/>)}
			{GUIDE_Y.map(([y]) => <line key={y} x1="0" x2="100%" y1={y + 0.5} y2={y + 0.5}/>)}
		</g>
		<g stroke="#0f0" strokeDasharray="3 3" shapeRendering="crispEdges">
			<line x1="0" x2="100%" y1="247.5" y2="247.5" stroke="#eceaf4" strokeDasharray="none"/>
			<line x1="0" x2="100%" y1="247.5" y2="247.5"/>
			<line x1="461.5" x2="461.5" y1="0" y2="100%" stroke="#eceaf4" strokeDasharray="none"/>
			<line x1="461.5" x2="461.5" y1="0" y2="100%" strokeDasharray="5 3"/>
		</g>
		<g stroke="#000" shapeRendering="crispEdges">
			{GRID_X.map(x => <line key={x} x1={x + 0.5} x2={x + 0.5} y1="18" y2="477"/>)}
			{GRID_Y.map(y => <line key={y} x1="231" x2="691" y1={y + 0.5} y2={y + 0.5}/>)}
		</g>
		<g fill="#bcbcbc" fontFamily="Liberation Sans, sans-serif" fontSize="12" fontStyle="italic">
			{GUIDE_X.map(([x, label]) => <text key={x} x={x + 5} y="11">{label}</text>)}
			{GUIDE_Y.map(([y, label]) => <text key={y} x="6" y={y + 13}>{label}</text>)}
		</g>
		<g fontFamily="Liberation Sans, sans-serif" fontSize="11">
			<text x="443" y="11">+Y</text>
			<text x="446" y="492">-Y</text>
			<text x="443" y="245">+Z</text>
			<text x="5" y="245">-X</text>
			<text x="903" y="245">+X</text>
		</g>
	</Drawing>
);

const ScrollArrow = ({label, turn}) => (
	<PlainButton aria-label={label}>
		<Svg viewBox="0 0 18 18" $size={16} aria-hidden="true">
			<path d="M5 11l4-4 4 4" fill="none" stroke="#505050" strokeWidth="2" transform={`rotate(${turn} 9 9)`}/>
		</Svg>
	</PlainButton>
);

const CadWindow = () => (
	<Window>
		<TitleBar>
			<Icon name="app"/>
			<TitleText>SESCAD - [MZ_1-Grid.F05-视图(1) (X-Y 视图)]</TitleText>
			<Caption>
				<PlainButton aria-label="Minimize"><Icon name="minus"/></PlainButton>
				<PlainButton aria-label="Maximize"><Icon name="square" size={20}/></PlainButton>
				<PlainButton aria-label="Close window"><Icon name="close"/></PlainButton>
			</Caption>
		</TitleBar>
		<MenuBar>
			<Icon name="doc" crisp/>
			<Menus>
				{MENUS.map(menu => <a key={menu} href="#menu">{menu}</a>)}
			</Menus>
			<MdiButtons>
				<PlainButton aria-label="Minimize view"><Icon name="mdiMin"/></PlainButton>
				<PlainButton aria-label="Restore view"><Icon name="mdiRestore"/></PlainButton>
				<PlainButton aria-label="Close view"><Icon name="mdiClose"/></PlainButton>
			</MdiButtons>
		</MenuBar>
		<Bands>
			<Band>
				<BandInner>
					<Tool name="newFile"/><Tool name="open"/><Tool name="save"/><Tool name="saveAll"/>
					<Separator/>
					<Tool name="print"/>
				</BandInner>
			</Band>
			<Band $width={137}>
				<BandGrip/>
				<BandInner>
					<Tool name="shapesNew"/><Tool name="remove"/><Tool name="cut"/><Tool name="copy"/><Tool name="paste"/>
				</BandInner>
			</Band>
			<Band $width={133}>
				<BandGrip/>
				<BandInner>
					<Tool name="undo"/><Tool name="redo"/><Tool name="group"/><Tool name="ungroup"/><Tool name="groupEdit" pressed/>
				</BandInner>
			</Band>
			<Band $width={130}>
				<BandGrip/>
				<BandInner>
					<Tool name="rotate"/><Tool name="rotate3d"/>
					<Separator/>
					<Tool name="info"/>
					<Tool name="report"><RxLabel/></Tool>
				</BandInner>
			</Band>
			<Band $width={167} $last>
				<BandGrip/>
				<BandInner>
					<Tool name="X-Y" pressed><PlaneLabel text="X-Y"/></Tool>
					<Tool name="X-Z"><PlaneLabel text="X-Z"/></Tool>
					<Tool name="Y-Z"><PlaneLabel text="Y-Z"/></Tool>
					<Separator/>
					<Tool name="viewCube"/><Tool name="viewFlat" pressed/><Tool name="viewInset"/>
				</BandInner>
			</Band>
		</Bands>
		<Options>
			<BandGrip/>
			<Field $width={134} $pad={2} $gap={-5}>
				<Icon name="target" crisp/>
				<select aria-label="Type" defaultValue="main"><option value="main">主电极</option></select>
				<Icon name="chevronDown"/>
			</Field>
			<Field $width={49} $pad={0}>
				<input type="text" aria-label="Size" defaultValue=".5"/>
			</Field>
			<Field $width={121} $pad={0} $gap={4} $flat>
				<select aria-label="Mode" defaultValue="std"><option value="std">标准</option></select>
				<Icon name="chevronDown"/>
			</Field>
		</Options>
		<Work>
			<ToolColumn>
				<Tool name="pointer" pressed/><Tool name="solidPointer"/><Tool name="pencil"/><Tool name="pencilBall"/>
				<Tool name="bolt"/><Tool name="ruler"/><Tool name="plane"/><Tool name="magnify"/>
				<Separator/>
				<Tool name="shapes"/><Tool name="shapesOff"/><Tool name="zoomFit"/><Tool name="zoomFit"/>
				<Separator/>
				<Tool name="down"/><Tool name="up"/>
				<Separator/>
			</ToolColumn>
			<View>
				<ViewFrame>
					<GridDrawing/>
					<ScrollBar $vertical>
						<ScrollArrow label="Scroll up" turn={0}/>
						<Track $vertical>
							<Thumb $vertical $share={152}/>
							<Thumb $vertical $share={155} $visible/>
							<Thumb $vertical $share={154}/>
						</Track>
						<ScrollArrow label="Scroll down" turn={180}/>
					</ScrollBar>
					<ScrollBar>
						<ScrollArrow label="Scroll left" turn={270}/>
						<Track>
							<Thumb $share={296}/>
							<Thumb $share={297} $visible/>
							<Thumb $share={297}/>
						</Track>
						<ScrollArrow label="Scroll right" turn={90}/>
					</ScrollBar>
					<Corner/>
				</ViewFrame>
				<ViewTools>
					<Tool name="redX" pressed/><Tool name="ballArrow"/><Tool name="ballRed"/><Tool name="ballCyan"/>
					<Tool name="spark"/><Tool name="probe"/><Tool name="disc"/><Tool name="box"/>
					<Tool name="stack"/><Tool name="angle"/>
					{[1, 2, 3].map(n => <Tool key={n} name={`find ${n}`}><Binoculars text={n}/></Tool>)}
					<Separator/>
					<Tool name="gridMulti"/><Tool name="gridCyan" pressed/><Tool name="gridBlue"/>
					<Separator/>
					<Tool name="left"/><Tool name="right"/>
					<Separator/>
					<Tool name="gridPick"/><Tool name="gridFind"/><Tool name="props"/><Tool name="legend" pressed/>
					<Separator/>
					<Filter>无过滤器</Filter>
				</ViewTools>
			</View>
		</Work>
		<StatusBar>
			<Icon name="info" size={19}/>
			<StatusText>准备就绪</StatusText>
			<Coordinates>
				<span>(</span><span>20.692</span><span>,</span><span>-8.237</span>
				<span>,</span><span>0.5</span><span>)</span><span>米</span>
			</Coordinates>
			<Icon name="check"/>
			<Errors>无缺陷</Errors>
		</StatusBar>
	</Window>
);

const App = () => (
	<>
		<GlobalStyle/>
		<Desktop>
			<EntityPanel/>
			<CadWindow/>
			<ArrowOverlay viewBox="0 0 160 80" aria-hidden="true">
				<path d="M13 11l133 35M129 15l18 31-33 19" fill="none" stroke="#7092be" strokeWidth="8" strokeLinecap="round" strokeLinejoin="round"/>
			</ArrowOverlay>
		</Desktop>
	</>
);

export default App;
